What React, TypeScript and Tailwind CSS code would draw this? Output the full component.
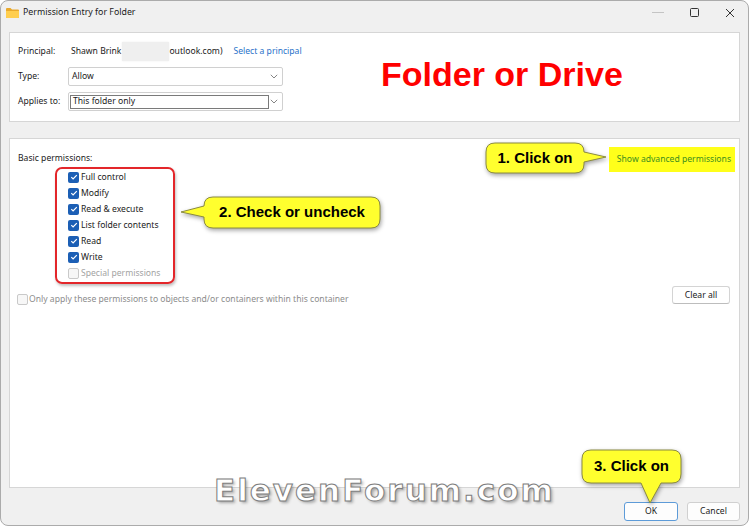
import React from "react";

function Box({ checked }: { checked: boolean }) {
  return checked ? (
    <span className="w-[11px] h-[11px] rounded-[2px] bg-[#1c5fb5] flex items-center justify-center shrink-0">
      <svg width="8" height="8" viewBox="0 0 8 8">
        <path d="M1.3 4.1 L3.1 5.9 L6.8 2.1" stroke="white" strokeWidth="1.2" fill="none" />
      </svg>
    </span>
  ) : (
    <span className="w-[11px] h-[11px] rounded-[2px] border border-[#c9c9c9] bg-[#f7f7f7] shrink-0" />
  );
}

function Chevron() {
  return (
    <svg width="8" height="5" viewBox="0 0 8 5">
      <path d="M0.8 0.8 L4 4 L7.2 0.8" stroke="#777" strokeWidth="0.9" fill="none" />
    </svg>
  );
}

const perms = ["Full control", "Modify", "Read & execute", "List folder contents", "Read", "Write"];

export default function App() {
  return (
    <div className="w-[750px] h-[527px] bg-white">
      <div className="relative w-[749px] h-[526px] bg-[#f0f0f0] border border-[#ababab] rounded-[8px] flex flex-col overflow-hidden font-['Noto_Sans',sans-serif] text-[8.6px] text-[#1a1a1a]">
        {/* title bar */}
        <div className="h-[23px] flex items-center pl-[5px] shrink-0">
          <svg width="13" height="10" viewBox="0 0 13 10">
            <path d="M0 1 Q0 0 1 0 H4.5 L6 1.5 H12 Q13 1.5 13 2.5 V9 Q13 10 12 10 H1 Q0 10 0 9 Z" fill="#e9a92c" />
            <path d="M0 3 H13 V9 Q13 10 12 10 H1 Q0 10 0 9 Z" fill="#ffce4f" />
          </svg>
          <span className="ml-[4px] text-[8.8px] text-[#1a1a1a]">Permission Entry for Folder</span>
          <div className="ml-auto flex items-center h-full">
            <div className="w-[36px] flex justify-center">
              <span className="w-[12px] h-px bg-[#c4c4c4]" />
            </div>
            <div className="w-[36px] flex justify-center">
              <span className="w-[9px] h-[9px] border border-[#333] rounded-[1.5px]" />
            </div>
            <div className="w-[36px] flex justify-center">
              <svg width="10" height="10" viewBox="0 0 10 10">
                <path d="M1 1 L9 9 M9 1 L1 9" stroke="#333" strokeWidth="1" />
              </svg>
            </div>
          </div>
        </div>

        {/* top panel */}
        <div className="mt-[8px] mx-[8px] h-[90px] bg-white border border-[#d6d6d6] pt-[9px] pl-[8px] flex flex-col gap-[6px] shrink-0">
          <div className="h-[19px] flex items-center">
            <span className="w-[50px]">Principal:</span>
            <span className="ml-[3px]">Shawn Brink</span>
            <span className="ml-[1px] w-[47px] h-[19px] bg-[#efefef] shadow-[0_0_2px_#efefef]" />
            <span>outlook.com)</span>
            <span className="ml-[11px] text-[#2a72c9]">Select a principal</span>
          </div>
          <div className="h-[19px] flex items-center">
            <span className="w-[50px]">Type:</span>
            <div className="w-[215px] h-[19px] border border-[#d0d0d0] rounded-[2px] bg-white flex items-center pl-[3px] pr-[4px]">
              <span>Allow</span>
              <span className="ml-auto flex"><Chevron /></span>
            </div>
          </div>
          <div className="h-[19px] flex items-center">
            <span className="w-[50px]">Applies to:</span>
            <div className="w-[215px] h-[19px] border border-[#d0d0d0] rounded-[2px] bg-white flex items-center pl-[1px] pr-[4px]">
              <div className="w-[199px] h-[14px] border border-[#7a7a7a] flex items-center pl-[2px]">This folder only</div>
              <span className="ml-auto flex"><Chevron /></span>
            </div>
          </div>
        </div>

        {/* main panel */}
        <div className="mt-[16px] mx-[8px] flex-1 bg-white border border-[#d6d6d6] pt-[8px] pl-[8px] pr-[4px] flex flex-col">
          <div className="h-[20px] flex items-start justify-between">
            <span className="pt-[5px] leading-[12px]">Basic permissions:</span>
            <span className="h-[25px] bg-[#ffff1a] pl-[8px] pr-[4px] flex items-center pb-[1px] text-[#3e8e1e]">Show advanced permissions</span>
          </div>
          <div className="ml-[37px] w-[120px] h-[117px] border-2 border-[#e3262a] rounded-[7px] shadow-[1px_2px_3px_rgba(0,0,0,0.25)] flex flex-col">
            {perms.map((p) => (
              <div key={p} className="h-[16px] flex items-center pl-[11px] gap-[2px]">
                <Box checked />
                <span>{p}</span>
              </div>
            ))}
            <div className="h-[16px] flex items-center pl-[11px] gap-[2px] text-[#a3a3a3]">
              <Box checked={false} />
              <span>Special permissions</span>
            </div>
          </div>
          <div className="mt-[2px] flex items-start justify-between pr-[5px]">
            <div className="mt-[7px] ml-[-1px] flex items-center gap-[1px] text-[#8c8c8c]">
              <Box checked={false} />
              <span>Only apply these permissions to objects and/or containers within this container</span>
            </div>
            <button className="w-[58px] h-[18px] bg-white border border-[#d4d4d4] border-b-[#bdbdbd] rounded-[3px] text-[8.6px] text-[#1a1a1a]">Clear all</button>
          </div>
        </div>

        {/* footer */}
        <div className="h-[37px] shrink-0 flex items-start justify-end pt-[14px] pr-[8px] gap-[9px]">
          <button className="w-[54px] h-[19px] bg-[#fdfdfd] border border-[#5d9bd8] rounded-[3px] text-[8.6px] text-[#1a1a1a]">OK</button>
          <button className="w-[53px] h-[19px] bg-[#fdfdfd] border border-[#d0d0d0] rounded-[3px] text-[8.6px] text-[#1a1a1a]">Cancel</button>
        </div>

        {/* annotations */}
        <span className="absolute left-[380px] top-[56px] leading-none text-[34px] font-bold text-[#ff0000] font-['Liberation_Sans',Arial,sans-serif]">Folder or Drive</span>

        <div className="absolute left-[483px] top-[140px] w-[124px] h-[35px]">
          <svg width="124" height="35" viewBox="0 0 124 35" className="absolute inset-0 drop-shadow-[1px_2px_2px_rgba(0,0,0,0.35)]">
            <path d="M11 2 H91 Q100 2 100 11 V11 L122 16 L100 21 V23 Q100 32 91 32 H11 Q2 32 2 23 V11 Q2 2 11 2 Z" fill="#ffff2e" stroke="#8a8a40" strokeWidth="1" />
          </svg>
          <span className="absolute left-[2px] top-[2px] w-[98px] h-[30px] flex items-center justify-center text-[15px] font-bold text-black font-['Liberation_Sans',Arial,sans-serif]">1. Click on</span>
        </div>

        <div className="absolute left-[178px] top-[194px] w-[204px] h-[36px]">
          <svg width="204" height="36" viewBox="0 0 204 36" className="absolute inset-0 drop-shadow-[1px_2px_2px_rgba(0,0,0,0.35)]">
            <path d="M34 2 H192 Q201 2 201 11 V24 Q201 33 192 33 H34 Q25 33 25 24 V22 L2 17 L25 11 Q25 2 34 2 Z" fill="#ffff2e" stroke="#8a8a40" strokeWidth="1" />
          </svg>
          <span className="absolute left-[25px] top-[2px] w-[176px] h-[31px] flex items-center justify-center text-[15px] font-bold text-black font-['Liberation_Sans',Arial,sans-serif]">2. Check or uncheck</span>
        </div>

        <div className="absolute left-[579px] top-[447px] w-[104px] h-[58px]">
          <svg width="104" height="58" viewBox="0 0 104 58" className="absolute inset-0 drop-shadow-[1px_2px_2px_rgba(0,0,0,0.35)]">
            <path d="M11 2 H92 Q101 2 101 11 V26 Q101 35 92 35 H81 L70 55 L61 35 H11 Q2 35 2 26 V11 Q2 2 11 2 Z" fill="#ffff2e" stroke="#8a8a40" strokeWidth="1" />
          </svg>
          <span className="absolute left-[2px] top-[2px] w-[99px] h-[33px] flex items-center justify-center text-[15px] font-bold text-black font-['Liberation_Sans',Arial,sans-serif]">3. Click on</span>
        </div>

        <span className="absolute left-[213px] top-[474px] leading-none text-[31px] font-bold tracking-[2px] text-white font-['DejaVu_Sans',sans-serif] [-webkit-text-stroke:1px_#7d7d7d] [text-shadow:2px_2px_3px_rgba(0,0,0,0.3)]">ElevenForum.com</span>
      </div>
    </div>
  );
}
